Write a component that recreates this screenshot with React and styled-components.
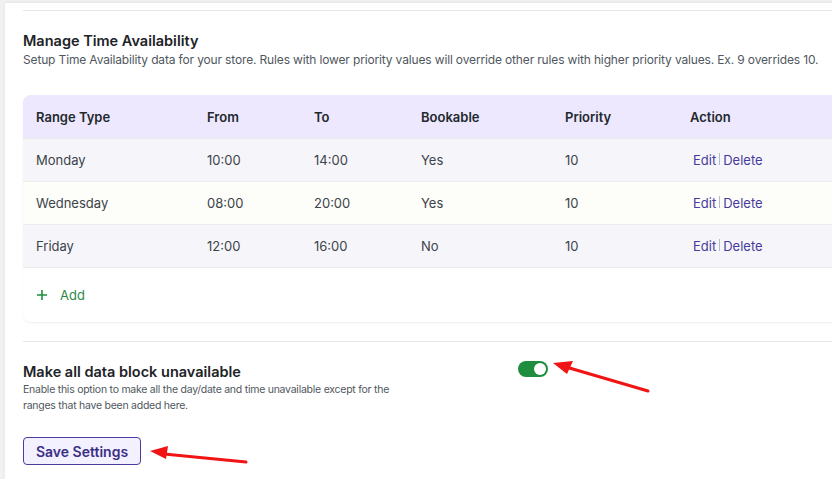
import React from "react";
import styled, { createGlobalStyle } from "styled-components";

const Global = createGlobalStyle`
  html, body { margin: 0; padding: 0; }
  body {
    background: #f1f1f1;
    font-family: Inter, "Noto Sans", "Liberation Sans", sans-serif;
    width: 832px;
    height: 479px;
    overflow: hidden;
  }
`;

const Page = styled.div`
  position: relative;
  width: 832px;
  height: 479px;
  overflow: hidden;
`;

const Panel = styled.div`
  margin: 3px 0 0 5px;
  width: 900px;
  height: 476px;
  background: #fff;
  box-shadow: 0 -1px 3px rgba(0, 0, 0, 0.06);
  padding: 7px 0 0 18px;
  box-sizing: border-box;
`;

const Divider = styled.hr`
  border: 0;
  border-top: 1px solid #e6e6e6;
  margin: ${(p) => p.$m || "0"};
  width: 900px;
`;

const Section = styled.section`
  display: flex;
  flex-direction: column;
  margin-top: ${(p) => p.$mt || "0"};
`;

const Title = styled.h2`
  margin: 0;
  font-size: 14.5px;
  line-height: 20px;
  font-weight: 600;
  color: #1d2327;
`;

const Desc = styled.p`
  margin: 0;
  font-size: ${(p) => p.$size || "12px"};
  line-height: ${(p) => p.$lh || "18px"};
  letter-spacing: ${(p) => p.$ls || "-0.15px"};
  color: #50575e;
  max-width: ${(p) => p.$max || "none"};
`;

const TableCard = styled.div`
  margin-top: 26px;
  width: 850px;
  border-radius: 8px;
  overflow: hidden;
  background: #fff;
  box-shadow: 0 1px 2px rgba(0, 0, 0, 0.07);
`;

const Row = styled.div`
  display: grid;
  grid-template-columns: 171px 107px 107px 144px 125px 1fr;
  align-items: center;
  height: ${(p) => p.$h || "43px"};
  background: ${(p) => p.$bg};
  border-bottom: 1px solid #ececec;
  box-sizing: border-box;
`;

const HeadCell = styled.div`
  padding-left: 13px;
  font-size: 13px;
  font-weight: 600;
  color: #23282d;
`;

const Cell = styled.div`
  padding-left: 13px;
  font-size: 13px;
  color: #3c434a;
`;

const Actions = styled.div`
  padding-left: 13px;
  display: flex;
  align-items: center;
`;

const ActionLink = styled.a`
  font-size: 13px;
  color: #463b9c;
  padding: 0 3px;
  cursor: pointer;
`;

const Sep = styled.span`
  width: 1px;
  height: 12px;
  background: #b9b9c3;
  margin-top: -3px;
`;

const AddRow = styled.div`
  height: 54px;
  display: flex;
  align-items: center;
  padding-left: 13px;
  gap: 12px;
  color: #2c8a48;
  font-size: 13px;
`;

const Toggles = styled.div`
  display: flex;
  align-items: flex-start;
`;

const ToggleText = styled.div`
  width: 495px;
  display: flex;
  flex-direction: column;
`;

const Switch = styled.div`
  width: 30px;
  height: 16px;
  border-radius: 8px;
  background: #1e8e3e;
  display: flex;
  align-items: center;
  justify-content: flex-end;
  padding: 0 2px;
  box-sizing: border-box;
  margin-top: -1px;
`;

const Knob = styled.span`
  width: 12px;
  height: 12px;
  border-radius: 50%;
  background: #fff;
`;

const SaveButton = styled.button`
  margin-top: 23px;
  width: 118px;
  height: 28px;
  border: 1px solid #4a3c9e;
  border-radius: 4px;
  background: #f3f0ff;
  color: #3b2f84;
  font-family: inherit;
  font-size: 14px;
  font-weight: 600;
  padding: 0;
  cursor: pointer;
`;

const Overlay = styled.svg`
  position: absolute;
  left: 0;
  top: 0;
  pointer-events: none;
`;

const rows = [
  { day: "Monday", from: "10:00", to: "14:00", bookable: "Yes", priority: "10", bg: "#f6f6fa" },
  { day: "Wednesday", from: "08:00", to: "20:00", bookable: "Yes", priority: "10", bg: "#fdfdf9" },
  { day: "Friday", from: "12:00", to: "16:00", bookable: "No", priority: "10", bg: "#f6f6fa" },
];

export default function App() {
  return (
    <Page>
      <Global />
      <Panel>
        <Divider />
        <Section $mt="20px">
          <Title>Manage Time Availability</Title>
          <Desc>
            Setup Time Availability data for your store. Rules with lower priority values will override other rules with higher priority values. Ex. 9 overrides 10.
          </Desc>
          <TableCard>
            <Row $bg="#ede8fd" $h="44px">
              <HeadCell>Range Type</HeadCell>
              <HeadCell>From</HeadCell>
              <HeadCell>To</HeadCell>
              <HeadCell>Bookable</HeadCell>
              <HeadCell>Priority</HeadCell>
              <HeadCell>Action</HeadCell>
            </Row>
            {rows.map((r) => (
              <Row key={r.day} $bg={r.bg}>
                <Cell>{r.day}</Cell>
                <Cell>{r.from}</Cell>
                <Cell>{r.to}</Cell>
                <Cell>{r.bookable}</Cell>
                <Cell>{r.priority}</Cell>
                <Actions>
                  <ActionLink>Edit</ActionLink>
                  <Sep />
                  <ActionLink>Delete</ActionLink>
                </Actions>
              </Row>
            ))}
            <AddRow>
              <svg width="12" height="12" viewBox="0 0 12 12">
                <path d="M6 1v10M1 6h10" stroke="#1e8e3e" strokeWidth="1.6" />
              </svg>
              <span>Add</span>
            </AddRow>
          </TableCard>
        </Section>
        <Divider $m="19px 0 0 0" />
        <Section $mt="20px">
          <Toggles>
            <ToggleText>
              <Title>Make all data block unavailable</Title>
              <Desc $size="10.5px" $lh="16px" $ls="-0.25px" $max="375px">
                Enable this option to make all the day/date and time unavailable except for the ranges that have been added here.
              </Desc>
            </ToggleText>
            <Switch>
              <Knob />
            </Switch>
          </Toggles>
          <div>
            <SaveButton>Save Settings</SaveButton>
          </div>
        </Section>
      </Panel>
      <Overlay width="832" height="479" viewBox="0 0 832 479">
        <line x1="648" y1="391" x2="566" y2="367" stroke="#f01414" strokeWidth="3" strokeLinecap="round" />
        <polygon points="553,363 573,361 567,374" fill="#f01414" />
        <line x1="246" y1="462" x2="164" y2="454" stroke="#f01414" strokeWidth="3" strokeLinecap="round" />
        <polygon points="150,451 168,446 166,459" fill="#f01414" />
      </Overlay>
    </Page>
  );
}
